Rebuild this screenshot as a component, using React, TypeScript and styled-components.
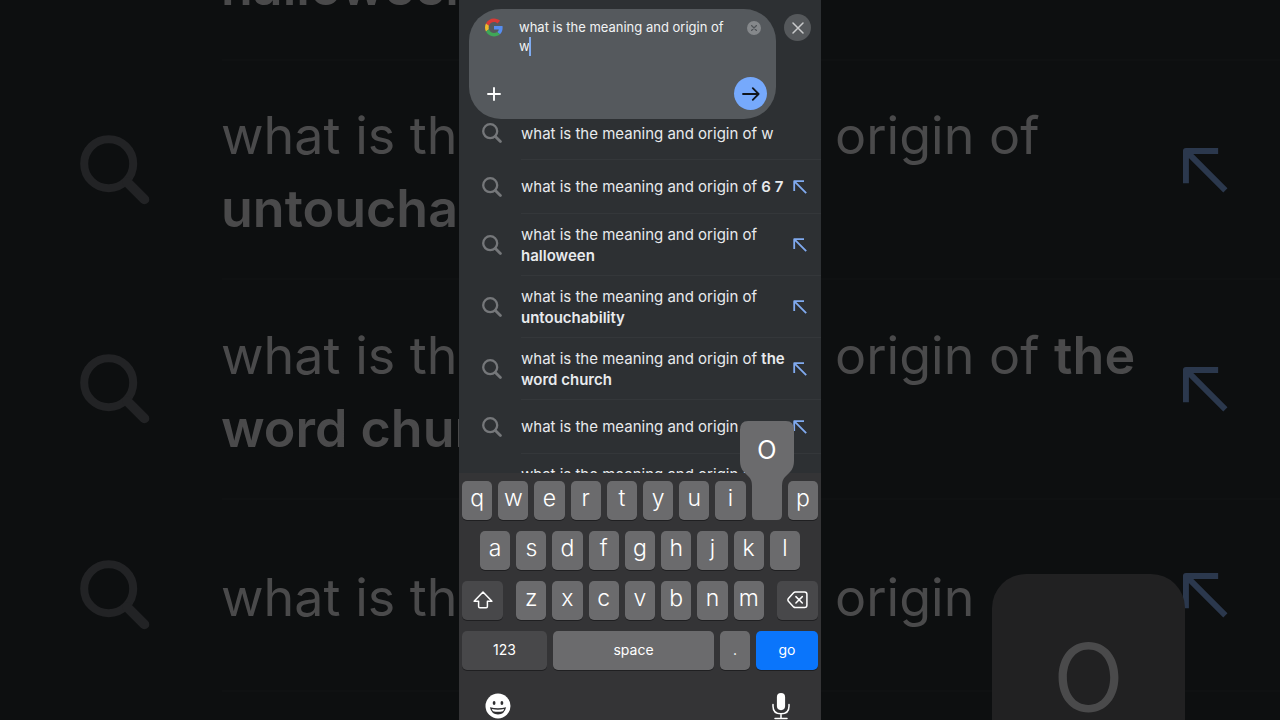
import React from "react";
import styled, { createGlobalStyle, css } from "styled-components";

const GlobalStyle = createGlobalStyle`
  *, *::before, *::after { box-sizing: border-box; }
  body {
    margin: 0;
    background: #0d0f10;
    font-family: Inter, "Liberation Sans", sans-serif;
  }
  button, textarea { font: inherit; }
`;

const Stage = styled.div`
  position: relative;
  display: flex;
  justify-content: center;
  height: 100vh;
  overflow: hidden;
`;

/* ---------- enlarged, dimmed copy behind the phone ---------- */

const Backdrop = styled.div`
  position: absolute;
  inset: 0;
  display: flex;
  flex-direction: column;
  overflow: hidden;
  color: #4a4a4b;
`;

const BackdropRow = styled.div<{ $height: number; $end?: boolean }>`
  flex: none;
  display: grid;
  grid-template-columns: 70px minmax(0, 1fr) 46px;
  column-gap: 71px;
  align-items: center;
  align-content: ${(p) => (p.$end ? "end" : "center")};
  height: ${(p) => p.$height}px;
  padding: 0 52px ${(p) => (p.$end ? 36 : 0)}px 80px;
`;

const BackdropText = styled.p`
  grid-column: 2;
  margin: 0;
  padding-top: 5px;
  font-size: 52px;
  line-height: 73px;
  white-space: nowrap;
`;

const BackdropRule = styled.div`
  flex: none;
  height: 2px;
  margin-left: 222px;
  background: #0f1112;
`;

const BackdropPopup = styled.div`
  position: absolute;
  top: 574px;
  left: 992px;
  width: 193px;
  height: 200px;
  border-radius: 34px;
  background: #212122;
  color: #4a4a4b;
  font-size: 124px;
  font-weight: 300;
  line-height: 184px;
  text-align: center;
`;

/* ---------- phone ---------- */

const Phone = styled.main`
  position: relative;
  display: flex;
  flex-direction: column;
  width: 362px;
  height: 100%;
  background: #2d3033;
  color: #e8eaed;
`;

const Header = styled.form`
  flex: none;
  display: flex;
  align-items: flex-start;
  gap: 8px;
  padding: 9px 10px 0;
`;

const SearchBox = styled.div`
  flex: 1;
  display: flex;
  flex-direction: column;
  justify-content: space-between;
  height: 110px;
  padding: 9px 9px 9px 16px;
  border-radius: 32px;
  background: #55595d;
`;

const BoxRow = styled.div<{ $top?: boolean }>`
  display: flex;
  gap: 16px;
  justify-content: space-between;
  align-items: ${(p) => (p.$top ? "flex-start" : "center")};
  padding-right: ${(p) => (p.$top ? 6 : 0)}px;
`;

const QueryField = styled.div`
  position: relative;
  flex: 1;
  height: 38px;
`;

const Query = styled.textarea`
  display: block;
  width: 100%;
  height: 38px;
  padding: 0;
  border: 0;
  outline: 0;
  resize: none;
  overflow: hidden;
  background: none;
  color: #f1f3f4;
  font-size: 13px;
  line-height: 19px;
`;

const Caret = styled.span`
  position: absolute;
  top: 19px;
  left: 10px;
  width: 2px;
  height: 19px;
  background: #7fabf0;
`;

const iconButton = css`
  display: flex;
  align-items: center;
  justify-content: center;
  flex: none;
  padding: 0;
  border: 0;
  background: none;
  color: inherit;
`;

const IconButton = styled.button<{ $size: number; $fill?: string }>`
  ${iconButton}
  width: ${(p) => p.$size}px;
  height: ${(p) => p.$size}px;
  border-radius: 50%;
  background: ${(p) => p.$fill ?? "none"};
`;

const ClearButton = styled(IconButton)`
  margin-top: 3px;
`;

const CloseButton = styled(IconButton)`
  margin-top: 5px;
`;

const Suggestions = styled.ul`
  flex: 1 1 0;
  min-height: 0;
  margin: 0;
  padding: 0;
  list-style: none;
  overflow: hidden;
`;

const Suggestion = styled.li<{ $size: "first" | "single" | "double" }>`
  display: grid;
  grid-template-columns: 20px 1fr 14px;
  column-gap: 10px;
  align-items: center;
  height: ${(p) => ({ first: 41, single: 54, double: 62 })[p.$size]}px;
  padding: 0 14px ${(p) => (p.$size === "first" ? 13 : 1)}px 23px;
  background: linear-gradient(#34373a, #34373a) 62px 100% / 100% 1px no-repeat;
`;

const SuggestionText = styled.p`
  margin: 0 -10px 0 9px;
  font-size: 15px;
  line-height: 21px;
`;

const Strong = styled.strong`
  font-weight: 600;
`;

const Keyboard = styled.section`
  flex: none;
  display: flex;
  flex-direction: column;
  gap: 11px;
  height: 247px;
  padding: 8px 3px 0;
  background: #343436;
`;

const KeyRow = styled.div<{ $inset?: number; $gap?: number }>`
  display: flex;
  gap: ${(p) => p.$gap ?? 6}px;
  padding: 0 ${(p) => p.$inset ?? 0}px;
`;

const LetterGroup = styled.div`
  flex: 1;
  display: flex;
  gap: 6px;
`;

const Key = styled.button<{ $width?: number; $tone?: "dark" | "blue"; $label?: boolean }>`
  ${iconButton}
  position: relative;
  flex: ${(p) => (p.$width ? `0 0 ${p.$width}px` : "1 1 0")};
  min-width: 0;
  height: 39px;
  padding-bottom: ${(p) => (p.$label ? 2 : 5)}px;
  border-radius: 5px;
  background: ${(p) => (p.$tone === "dark" ? "#48484a" : p.$tone === "blue" ? "#0a75fb" : "#6b6b6d")};
  box-shadow: 0 1px 0 #1f1f21;
  color: #fff;
  font-size: ${(p) => (p.$label ? 14 : 23)}px;
  font-weight: ${(p) => (p.$label ? 400 : 300)};
`;

const PressedKey = styled(Key)`
  background: none;
  box-shadow: none;
`;

const Popup = styled.span`
  position: absolute;
  bottom: 0;
  left: 50%;
  width: 56px;
  height: 99px;
  margin-left: -28px;
`;

const PopupShape = styled.svg`
  display: block;
`;

const PopupLetter = styled.span`
  position: absolute;
  inset: 0 0 auto;
  font-size: 34px;
  line-height: 52px;
  text-align: center;
`;

const KeyboardFooter = styled.div`
  display: flex;
  justify-content: space-between;
  padding: 11px 23px 0 22px;
`;

/* ---------- icons ---------- */

const SearchIcon = ({ size, color }: { size: number; color: string }) => (
  <svg width={size} height={size} viewBox="0 0 20 20" fill="none" stroke={color}>
    <circle cx="8.2" cy="8.2" r="7" strokeWidth="2.3" />
    <path d="M13.4 13.4 18.4 18.4" strokeWidth="2.8" strokeLinecap="round" />
  </svg>
);

const FillIcon = ({ size, color }: { size: number; color: string }) => (
  <svg width={size} height={size} viewBox="0 0 14 14" fill="none" stroke={color} strokeWidth="1.8" strokeLinejoin="round">
    <path d="M1.2 11V1.2H11M1.2 1.2 13.2 13.2" />
  </svg>
);

const GoogleLogo = () => (
  <svg width="18" height="19" viewBox="0 0 48 48" aria-label="Google">
    <path fill="#d93a35" d="M24 9.5c3.54 0 6.71 1.22 9.21 3.6l6.85-6.85C35.9 2.38 30.47 0 24 0 14.62 0 6.51 5.38 2.56 13.22l7.98 6.19C12.43 13.72 17.74 9.5 24 9.5z" />
    <path fill="#568df0" d="M46.98 24.55c0-1.57-.15-3.09-.38-4.55H24v9.02h12.94c-.58 2.96-2.26 5.48-4.78 7.18l7.73 6c4.51-4.18 7.09-10.36 7.09-17.65z" />
    <path fill="#f0b92b" d="M10.53 28.59c-.48-1.45-.76-2.99-.76-4.59s.27-3.14.76-4.59l-7.98-6.19C.92 16.46 0 20.12 0 24c0 3.88.92 7.54 2.56 10.78l7.97-6.19z" />
    <path fill="#3fa757" d="M24 48c6.48 0 11.93-2.13 15.89-5.81l-7.73-6c-2.15 1.45-4.92 2.3-8.16 2.3-6.26 0-11.57-4.22-13.47-9.91l-7.98 6.19C6.51 42.62 14.62 48 24 48z" />
  </svg>
);

const CrossIcon = ({ size, color, weight }: { size: number; color: string; weight: number }) => (
  <svg width={size} height={size} viewBox="0 0 12 12" fill="none" stroke={color} strokeWidth={weight} strokeLinecap="round">
    <path d="M1 1 11 11M11 1 1 11" />
  </svg>
);

const PlusIcon = () => (
  <svg width="14" height="14" viewBox="0 0 14 14" fill="none" stroke="#fff" strokeWidth="1.9" strokeLinecap="round">
    <path d="M7 1V13M1 7H13" />
  </svg>
);

const ArrowRightIcon = () => (
  <svg width="18" height="14" viewBox="0 0 18 14" fill="none" stroke="#10151d" strokeWidth="1.8" strokeLinecap="round" strokeLinejoin="round">
    <path d="M1 7H16.4M10.8 1.2 16.6 7 10.8 12.8" />
  </svg>
);

const ShiftIcon = () => (
  <svg width="20" height="18" viewBox="0 0 20 18" fill="none" stroke="#fff" strokeWidth="1.5" strokeLinejoin="round">
    <path d="M10 1.1 18.9 10.3H14.4V15.6Q14.4 16.8 13.2 16.8H6.8Q5.6 16.8 5.6 15.6V10.3H1.1Z" />
  </svg>
);

const DeleteIcon = () => (
  <svg width="21" height="18" viewBox="0 0 21 18" fill="none" stroke="#fff" strokeWidth="1.5" strokeLinejoin="round" strokeLinecap="round">
    <path d="M8.3 1H17.6Q19.9 1 19.9 3.3V14.3Q19.9 16.6 17.6 16.6H8.3Q7.3 16.6 6.6 15.9L1.4 10.2Q.4 8.8 1.4 7.4L6.6 1.7Q7.3 1 8.3 1Z" />
    <path d="M8.9 5.6 15.3 12M15.3 5.6 8.9 12" />
  </svg>
);

const EmojiIcon = () => (
  <svg width="26" height="26" viewBox="0 0 26 26">
    <circle cx="13" cy="13" r="12.5" fill="#fff" />
    <ellipse cx="9.1" cy="10" rx="1.4" ry="1.9" fill="#2f2f31" />
    <ellipse cx="16.9" cy="10" rx="1.4" ry="1.9" fill="#2f2f31" />
    <path d="M4.9 14.2Q13 16.4 21.1 14.2Q19.6 21.4 13 21.4Q6.4 21.4 4.9 14.2Z" fill="#2f2f31" />
    <path d="M6.8 16Q13 17.4 19.2 16Q18.8 17.6 17.9 18.2Q13 19.2 8.1 18.2Q7.2 17.6 6.8 16Z" fill="#fff" />
  </svg>
);

const MicIcon = () => (
  <svg width="18" height="28" viewBox="0 0 18 28" fill="none" stroke="#fff" strokeWidth="1.5" strokeLinecap="round">
    <rect x="4.9" y="1" width="8.2" height="17.2" rx="4.1" fill="#fff" stroke="none" />
    <path d="M1 12.4V14.2Q1 21.8 9 21.8Q17 21.8 17 14.2V12.4M9 21.8V26.2M3 26.4H15" />
  </svg>
);

/* ---------- content ---------- */

const STEM = "what is the meaning and origin";

type Item = { size: "first" | "single" | "double"; tail: string; bold?: string; icon?: boolean; fill?: boolean };

const items: Item[] = [
  { size: "first", tail: " of w", icon: true },
  { size: "single", tail: " of ", bold: "6 7", icon: true, fill: true },
  { size: "double", tail: " of ", bold: "halloween", icon: true, fill: true },
  { size: "double", tail: " of ", bold: "untouchability", icon: true, fill: true },
  { size: "double", tail: " of ", bold: "the word church", icon: true, fill: true },
  { size: "single", tail: "", icon: true, fill: true },
  { size: "double", tail: " of" },
];

const backdropIcon = <SearchIcon size={70} color="#222325" />;
const backdropFill = <FillIcon size={46} color="#2b384d" />;

export default function App() {
  return (
    <>
      <GlobalStyle />
      <Stage>
        <Backdrop aria-hidden="true">
          <BackdropRow $height={59} $end>
            <BackdropText><Strong>halloween</Strong></BackdropText>
          </BackdropRow>
          <BackdropRule />
          <BackdropRow $height={217}>
            {backdropIcon}
            <BackdropText>{STEM} of<br /><Strong>untouchability</Strong></BackdropText>
            {backdropFill}
          </BackdropRow>
          <BackdropRule />
          <BackdropRow $height={218}>
            {backdropIcon}
            <BackdropText>{STEM} of <Strong>the<br />word church</Strong></BackdropText>
            {backdropFill}
          </BackdropRow>
          <BackdropRule />
          <BackdropRow $height={190}>
            {backdropIcon}
            <BackdropText>{STEM}</BackdropText>
            {backdropFill}
          </BackdropRow>
          <BackdropRule />
          <BackdropPopup>o</BackdropPopup>
        </Backdrop>

        <Phone>
          <Header onSubmit={(e) => e.preventDefault()}>
            <SearchBox>
              <BoxRow $top>
                <GoogleLogo />
                <QueryField>
                  <Query aria-label="Search" spellCheck={false} defaultValue="what is the meaning and origin of w" />
                  <Caret />
                </QueryField>
                <ClearButton type="button" aria-label="Clear" $size={14} $fill="#85888b">
                  <CrossIcon size={6} color="#505458" weight={2.4} />
                </ClearButton>
              </BoxRow>
              <BoxRow>
                <IconButton type="button" aria-label="Add" $size={18}><PlusIcon /></IconButton>
                <IconButton type="submit" aria-label="Search" $size={33} $fill="#76a9fc"><ArrowRightIcon /></IconButton>
              </BoxRow>
            </SearchBox>
            <CloseButton type="button" aria-label="Close" $size={27} $fill="#55585b">
              <CrossIcon size={12} color="#c9cacb" weight={1.5} />
            </CloseButton>
          </Header>

          <Suggestions>
            {items.map((item, i) => (
              <Suggestion key={i} $size={item.size}>
                {item.icon ? <SearchIcon size={20} color="#75777a" /> : <span />}
                <SuggestionText>
                  {STEM}{item.tail}
                  {item.bold && <Strong>{item.bold}</Strong>}
                  {i === items.length - 1 && <br />}
                  {i === items.length - 1 && "\u00a0"}
                </SuggestionText>
                {item.fill && <FillIcon size={14} color="#80aaf0" />}
              </Suggestion>
            ))}
          </Suggestions>

          <Keyboard aria-label="Keyboard">
            <KeyRow>
              {[..."qwertyui"].map((c) => <Key key={c} type="button">{c}</Key>)}
              <PressedKey type="button">
                <Popup>
                  <PopupShape width="56" height="99" viewBox="0 0 56 99" fill="#6b6b6d">
                    <path d="M9 0H47Q55 0 55 9V40Q55 47 51 51L46 56Q43 59 43 65V94Q43 99 38 99H18Q13 99 13 94V65Q13 59 10 56L5 51Q1 47 1 40V9Q1 0 9 0Z" />
                  </PopupShape>
                  <PopupLetter>o</PopupLetter>
                </Popup>
              </PressedKey>
              <Key type="button">p</Key>
            </KeyRow>
            <KeyRow $inset={18}>
              {[..."asdfghjkl"].map((c) => <Key key={c} type="button">{c}</Key>)}
            </KeyRow>
            <KeyRow $gap={13}>
              <Key type="button" aria-label="Shift" $width={41} $tone="dark" $label><ShiftIcon /></Key>
              <LetterGroup>
                {[..."zxcvbnm"].map((c) => <Key key={c} type="button">{c}</Key>)}
              </LetterGroup>
              <Key type="button" aria-label="Delete" $width={41} $tone="dark" $label><DeleteIcon /></Key>
            </KeyRow>
            <KeyRow>
              <Key type="button" $width={85} $tone="dark" $label>123</Key>
              <Key type="button" $label>space</Key>
              <Key type="button" $width={30} $label>.</Key>
              <Key type="button" $width={62} $tone="blue" $label>go</Key>
            </KeyRow>
            <KeyboardFooter>
              <IconButton type="button" aria-label="Emoji" $size={28}><EmojiIcon /></IconButton>
              <IconButton type="button" aria-label="Dictate" $size={28}><MicIcon /></IconButton>
            </KeyboardFooter>
          </Keyboard>
        </Phone>
      </Stage>
    </>
  );
}
